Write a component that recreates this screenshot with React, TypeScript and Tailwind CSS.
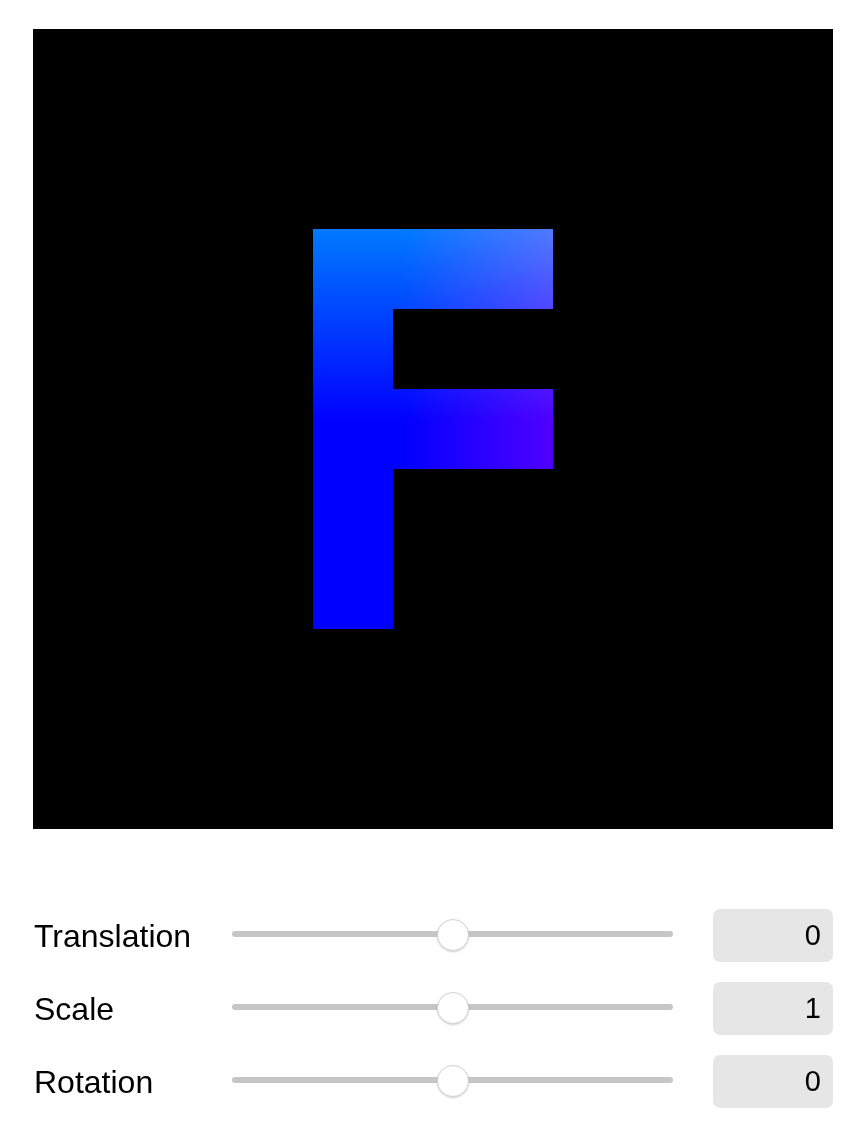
import React from "react";

const controls = [
  { label: "Translation", value: "0" },
  { label: "Scale", value: "1" },
  { label: "Rotation", value: "0" },
];

const LetterF = () => (
  <svg width="800" height="800" viewBox="0 0 800 800">
    <defs>
      <linearGradient id="fDown" x1="0" y1="200" x2="0" y2="600" gradientUnits="userSpaceOnUse">
        <stop offset="0" stopColor="#007aff" />
        <stop offset="0.48" stopColor="#0000ff" />
        <stop offset="1" stopColor="#0000ff" />
      </linearGradient>
      <linearGradient id="fSide" x1="370" y1="0" x2="520" y2="0" gradientUnits="userSpaceOnUse">
        <stop offset="0" stopColor="#000000" />
        <stop offset="1" stopColor="#500000" />
      </linearGradient>
    </defs>
    <path
      d="M280 200 H520 V280 H360 V360 H520 V440 H360 V600 H280 Z"
      fill="url(#fDown)"
    />
    <g className="mix-blend-screen">
      <rect x="360" y="200" width="160" height="80" fill="url(#fSide)" />
      <rect x="360" y="360" width="160" height="80" fill="url(#fSide)" />
    </g>
  </svg>
);

const Slider = () => (
  <div className="relative w-[441px] h-[32px] mb-[4px] flex items-center">
    <div className="w-full h-[6px] rounded-full bg-[#c6c6c6]" />
    <div className="absolute left-[205px] top-[1px] w-[32px] h-[32px] rounded-full bg-white border border-[#d4d4d4] shadow-[0_1px_2px_rgba(0,0,0,0.18)]" />
  </div>
);

export default function App() {
  return (
    <div
      className="w-[862px] h-[1136px] bg-white pl-[33px] pt-[29px]"
      style={{ fontFamily: '"Liberation Sans", Arial, sans-serif' }}
    >
      <div className="w-[800px] h-[800px] bg-black">
        <LetterF />
      </div>
      <div className="mt-[80px] flex flex-col gap-5 w-[800px]">
        {controls.map((c) => (
          <div key={c.label} className="flex items-center h-[53px]">
            <div className="w-[199px] pl-px text-[32px] text-black leading-none">
              {c.label}
            </div>
            <Slider />
            <div className="ml-auto w-[120px] h-[53px] rounded-[7px] bg-[#e6e6e6] flex items-center justify-end pr-3 text-[29px] text-black">
              {c.value}
            </div>
          </div>
        ))}
      </div>
    </div>
  );
}
